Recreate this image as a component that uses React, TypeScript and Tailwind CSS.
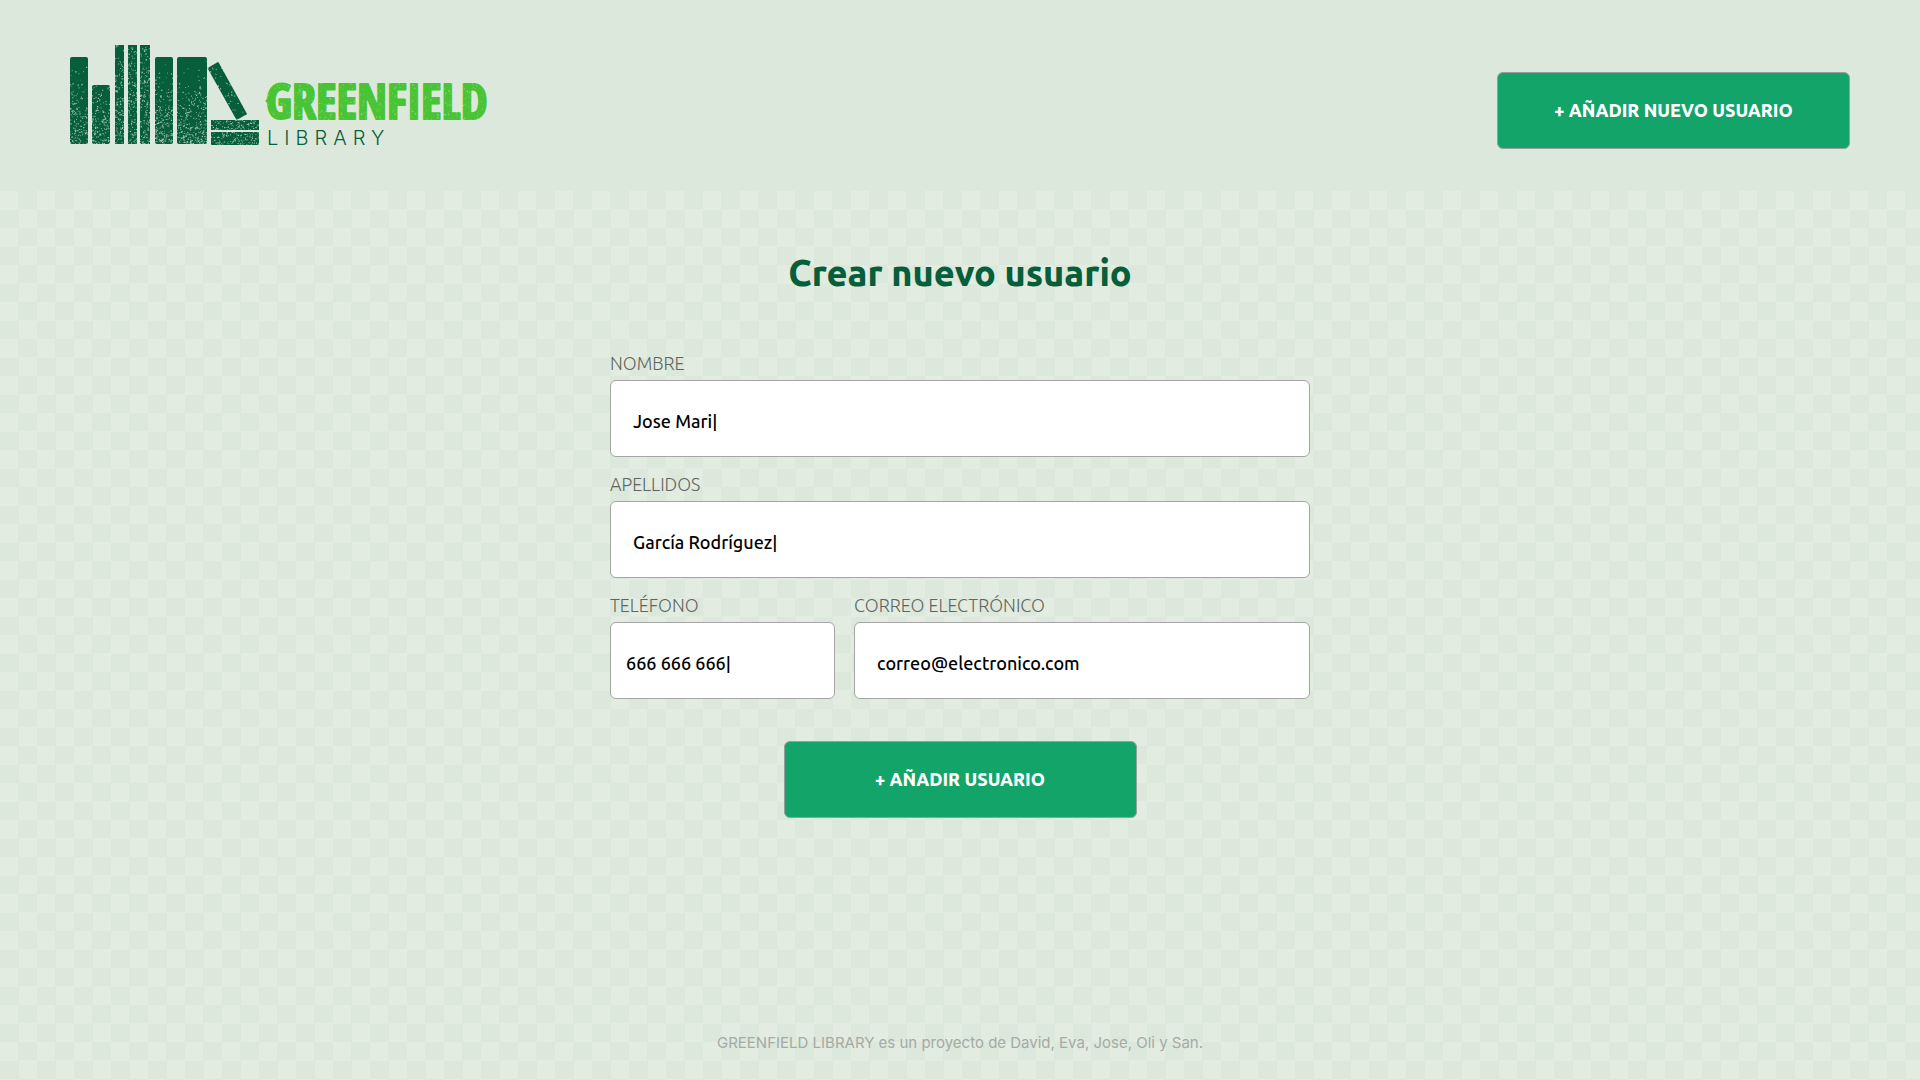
import type { InputHTMLAttributes } from "react";

type Book = { x: number; y: number; w: number; h: number; r: number };

const BOOKS: Book[] = [
  { x: 70, y: 57, w: 18, h: 87, r: 2 },
  { x: 92, y: 85, w: 18, h: 59, r: 2 },
  { x: 115, y: 45, w: 9, h: 99, r: 0 },
  { x: 128, y: 45, w: 9, h: 99, r: 0 },
  { x: 140, y: 45, w: 10, h: 99, r: 0 },
  { x: 155, y: 57, w: 18, h: 87, r: 2 },
  { x: 177, y: 57, w: 30, h: 87, r: 2 },
  { x: 211, y: 120, w: 48, h: 10, r: 0 },
  { x: 211, y: 132, w: 48, h: 13, r: 0 },
];

// Small deterministic generator so the worn-print texture is stable between renders.
function createRandom(seed: number) {
  let state = seed;
  return () => {
    state = (state * 1664525 + 1013904223) % 4294967296;
    return state / 4294967296;
  };
}

function speckles(
  seed: number,
  count: number,
  box: { x: number; y: number; w: number; h: number },
  weight: number,
) {
  const random = createRandom(seed);
  let d = "";
  for (let i = 0; i < count; i++) {
    const x = box.x + random() * box.w;
    const y = box.y + Math.pow(random(), weight) * box.h;
    const w = 0.5 + random() * 0.9;
    const h = 0.5 + random() * 0.9;
    d += `M${x.toFixed(1)} ${y.toFixed(1)}h${w.toFixed(1)}v${h.toFixed(1)}h-${w.toFixed(1)}z`;
  }
  return d;
}

const BOOK_SPECKLES =
  speckles(7, 1600, { x: 68, y: 56, w: 142, h: 90 }, 0.4) +
  speckles(11, 200, { x: 114, y: 45, w: 37, h: 60 }, 1) +
  speckles(19, 280, { x: 210, y: 118, w: 50, h: 28 }, 1) +
  speckles(31, 130, { x: 206, y: 62, w: 42, h: 58 }, 0.9);
const WORD_SPECKLES = speckles(43, 380, { x: 264, y: 80, w: 222, h: 42 }, 0.8);

function Logo() {
  return (
    <svg
      viewBox="70 45 420 101"
      className="h-[101px] w-[420px] overflow-visible"
      role="img"
      aria-label="Greenfield Library"
    >
      <g fill="#065e3a">
        {BOOKS.map((b) => (
          <rect key={b.x + "-" + b.y} x={b.x} y={b.y} width={b.w} height={b.h} rx={b.r} />
        ))}
        <path d="M207.500 68L217.500 62.200Q218.300 61.900 218.800 62.700L246.800 113.500Q247 114.300 246.300 114.700L236.500 120Z" />
      </g>
      <path d={BOOK_SPECKLES} fill="#dde8dc" opacity="0.7" />
      <text
        x="266"
        y="119"
        fontSize="48"
        fontWeight="700"
        fill="#49c435"
        stroke="#49c435"
        strokeWidth="2"
        strokeLinejoin="round"
        className="font-['Open_Sans_Condensed','Roboto_Condensed',sans-serif]"
      >
        GREENFIELD
      </text>
      <path d="M269 97l-4 4 4 3z" fill="#49c435" />
      <path d={WORD_SPECKLES} fill="#dde8dc" opacity="0.5" />
      <text
        x="267"
        y="145"
        fontSize="20"
        fontWeight="300"
        fill="#065e3a"
        className="font-[Inter,sans-serif] tracking-[6px]"
      >
        LIBRARY
      </text>
    </svg>
  );
}

type FieldProps = InputHTMLAttributes<HTMLInputElement> & {
  id: string;
  label: string;
  inset?: string;
};

function Field({ id, label, inset = "px-[22px]", className = "", ...rest }: FieldProps) {
  return (
    <div className={`flex flex-col gap-[5px] ${className}`}>
      <label htmlFor={id} className="text-[18px] leading-6 font-light text-[#5f6660]">
        {label}
      </label>
      <input
        id={id}
        className={`h-[77px] w-full rounded-md border border-[#a5a5a5] bg-white pt-[5px] text-[18px] font-[550] text-black outline-none ${inset}`}
        {...rest}
      />
    </div>
  );
}

const BUTTON =
  "h-[77px] w-[353px] rounded-md border border-[#999f9b] bg-[#12a469] text-[18px] font-extrabold text-white";

export default function App() {
  return (
    <div className="flex min-h-screen flex-col bg-[#dde8dc] font-[Ubuntu,'Noto_Sans',sans-serif]">
      <header className="flex items-end justify-between px-[70px] pt-[45px] pb-[42px]">
        <a href="#" className="mb-[3px]">
          <Logo />
        </a>
        <button type="button" className={BUTTON}>
          + AÑADIR NUEVO USUARIO
        </button>
      </header>

      <div className="flex flex-1 flex-col bg-[conic-gradient(#dde8dc_25%,#e2ece1_0_50%,#dde8dc_0_75%,#e2ece1_0)] bg-[length:37px_37px]">
        <main className="flex flex-1 flex-col items-center pt-[60px]">
          <h1 className="text-4xl leading-[44px] font-extrabold text-[#065e3a]">
            Crear nuevo usuario
          </h1>
          <form
            className="mt-14 flex w-full max-w-[700px] flex-col gap-[15px]"
            onSubmit={(e) => e.preventDefault()}
          >
            <Field id="nombre" label="NOMBRE" type="text" defaultValue="Jose Mari|" />
            <Field id="apellidos" label="APELLIDOS" type="text" defaultValue="García Rodríguez|" />
            <div className="flex gap-[19px]">
              <Field
                id="telefono"
                label="TELÉFONO"
                type="tel"
                defaultValue="666 666 666|"
                inset="px-[15px]"
                className="w-[225px]"
              />
              <Field
                id="correo"
                label="CORREO ELECTRÓNICO"
                type="email"
                defaultValue="correo@electronico.com"
                className="flex-1"
              />
            </div>
            <button type="submit" className={`mt-[27px] self-center ${BUTTON}`}>
              + AÑADIR USUARIO
            </button>
          </form>
        </main>
        <footer className="pb-[27px] text-center font-[Inter,sans-serif] text-[15px] leading-5 text-[#a5aaa5]">
          GREENFIELD LIBRARY es un proyecto de David, Eva, Jose, Oli y San.
        </footer>
      </div>
    </div>
  );
}
